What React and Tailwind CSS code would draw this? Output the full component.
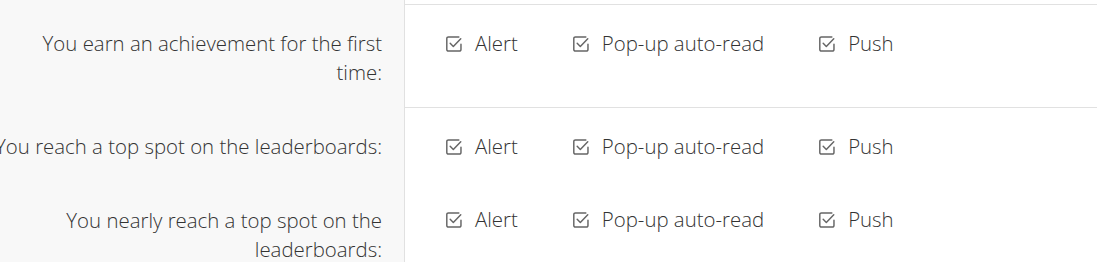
import React from 'react';

const rows = [
  { label: ['You earn an achievement for the first', 'time:'], border: true },
  { label: ['You reach a top spot on the leaderboards:'], border: true },
  { label: ['You nearly reach a top spot on the', 'leaderboards:'], border: false },
];

const options = ['Alert', 'Pop-up auto-read', 'Push'];

function CheckIcon() {
  return (
    <svg width="18" height="18" viewBox="0 0 16 16" fill="none" stroke="#666" strokeWidth="1.3" strokeLinecap="round" strokeLinejoin="round" className="shrink-0">
      <path d="M12.3 1.7H3a1.4 1.4 0 0 0-1.4 1.4v9.8a1.4 1.4 0 0 0 1.4 1.4h9.8a1.4 1.4 0 0 0 1.4-1.4V8.2" />
      <path d="M4.6 7.4l2.8 2.9 6.6-6.9" />
    </svg>
  );
}

export default function App() {
  return (
    <div className="w-[1097px] h-[262px] overflow-hidden bg-white text-[#333] font-[350]" style={{ fontFamily: '"Open Sans", "Noto Sans", sans-serif' }}>
      <div className="flex h-[4px]">
        <div className="w-[405px] shrink-0 bg-[#f8f8f8] border-r border-[#e1e1e1]" />
        <div className="flex-1" />
      </div>
      {rows.map((row, i) => (
        <div key={i} className="flex">
          {/* label column */}
          <div className="w-[405px] shrink-0 bg-[#f8f8f8] border-r border-[#e1e1e1] flex justify-end pr-[22px] pt-[25px] pb-[20px]">
            <div className="text-right whitespace-nowrap text-[20.4px] leading-[29px]">
              {row.label.map((line, j) => (
                <div key={j}>{line}</div>
              ))}
            </div>
          </div>
          {/* options */}
          <div className={`flex-1 pl-[40px] pt-[24px] ${row.border ? 'border-t border-[#e1e1e1]' : ''}`}>
            <div className="flex items-center gap-[54px] text-[20.4px] leading-[29px]">
              {options.map((opt) => (
                <label key={opt} className="flex items-center gap-[12px]">
                  <CheckIcon />
                  <span>{opt}</span>
                </label>
              ))}
            </div>
          </div>
        </div>
      ))}
    </div>
  );
}
